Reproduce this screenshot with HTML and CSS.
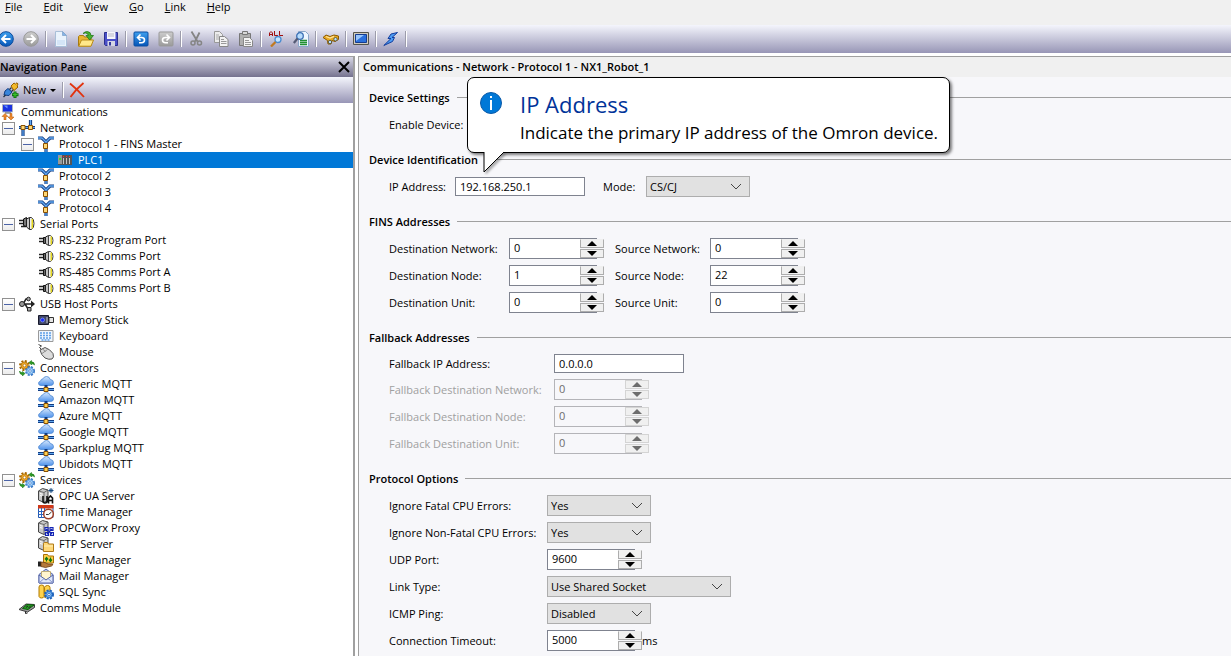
FILE: index.html
```html
<!DOCTYPE html>
<html lang="en">
<head>
    <meta charset="UTF-8">
    <meta name="viewport" content="width=device-width, initial-scale=1.0">
    <title>Communications</title>
    <link rel="stylesheet" href="styles.css">
</head>
<body>
    <!-- Icons used more than once -->
    <svg class="sprite" aria-hidden="true">
        <defs>
            <linearGradient id="cloudFill" x1="0" y1="0" x2="0" y2="1">
                <stop offset="0" stop-color="#d4e6fc"/>
                <stop offset="1" stop-color="#4f93ec"/>
            </linearGradient>
            <linearGradient id="blueBall" x1="0" y1="0" x2="0" y2="1">
                <stop offset="0" stop-color="#3fa0ee"/>
                <stop offset="1" stop-color="#0556b8"/>
            </linearGradient>
            <linearGradient id="greyBall" x1="0" y1="0" x2="0" y2="1">
                <stop offset="0" stop-color="#cdcdcd"/>
                <stop offset="1" stop-color="#9a9a9a"/>
            </linearGradient>
        </defs>
        <symbol id="protocol" viewBox="0 0 16 16">
            <path d="M0 2h4l4 4 4-4h4M8 6v10" fill="none" stroke="#123c82" stroke-width="3.200"/>
            <path d="M0 2h4l4 4 4-4h4M8 6v10" fill="none" stroke="#62a8f0" stroke-width="1.300"/>
            <path d="M5.500 7.500h4v5h-4z" fill="#ffd773" stroke="#8a5000"/>
        </symbol>
        <symbol id="serial" viewBox="0 0 16 16">
            <path d="M1 6.500h5M1 9.500h5" stroke="#222" stroke-width="1.700"/>
            <path d="M5.500 5.500h2v6h-2z" fill="#666" stroke="#111"/>
            <path d="M7.500 5l3-1.500v10l-3-2z" fill="#c4c4c4" stroke="#222"/>
            <path d="M10.500 3.500h2q2.500 1 2.500 5t-2.500 5h-2z" fill="#eee" stroke="#444"/>
            <path d="M12.500 4.500h1.500v8h-1.500z" fill="#e6d820"/>
        </symbol>
        <symbol id="cloud" viewBox="0 0 16 16">
            <path d="M3 9.500Q.5 9.500.5 7.300.5 5.500 2.500 5.200 2.800 3 5 2.800 6 .5 8.500.5q3 0 3.800 3 3.200.3 3.200 3.300 0 2.700-3 2.700z" fill="url(#cloudFill)" stroke="#4b86d2" stroke-width=".8"/>
            <path d="M8 9v3M0 13.500h16" stroke="#123c82" stroke-width="3"/>
            <path d="M0 13.500h16" stroke="#62a8f0"/>
            <path d="M6 11.500h4v4H6z" fill="#ffd050" stroke="#8a5000"/>
        </symbol>
        <symbol id="gears" viewBox="0 0 16 16">
            <circle cx="5.500" cy="5.500" r="4.500" fill="none" stroke="#a86800" stroke-width="2" stroke-dasharray="2 1.500"/>
            <circle cx="5.500" cy="5.500" r="3.500" fill="#efa92c" stroke="#b87a10"/>
            <circle cx="5.500" cy="5.500" r="1.400" fill="#fff" stroke="#a86800" stroke-width=".7"/>
            <circle cx="11" cy="11" r="4" fill="none" stroke="#3676c4" stroke-width="2" stroke-dasharray="2 1.200"/>
            <circle cx="11" cy="11" r="3.300" fill="#a5d2fa" stroke="#5b9ae0"/>
            <circle cx="11" cy="11" r="1.300" fill="#fff" stroke="#3676c4" stroke-width=".7"/>
            <path d="M10 2.500l2.500-2v1.300q3 0 3 3.200-1.200-1.300-3-1.200V5zM6 13.500l-2.500-2v1.200q-2 0-3-1.700 0 3.500 3 3.800V16z" fill="#2a9a22" stroke="#0e6a0c" stroke-width=".5"/>
        </symbol>
        <symbol id="server" viewBox="0 0 16 16">
            <path d="M.5 3l4-2.500L10 2v9.500L6 14.500.5 12z" fill="#c9c9c9" stroke="#444"/>
            <path d="M.5 3L6 4.500 10 2M6 4.500v10" fill="none" stroke="#555" stroke-width=".8"/>
            <path d="M2 5.500l2.500.7M2 7.500l2.500.7" stroke="#fff"/>
        </symbol>
    </svg>

    <nav class="menu-bar">
        <button type="button"><u>F</u>ile</button>
        <button type="button"><u>E</u>dit</button>
        <button type="button"><u>V</u>iew</button>
        <button type="button"><u>G</u>o</button>
        <button type="button"><u>L</u>ink</button>
        <button type="button"><u>H</u>elp</button>
    </nav>

    <div class="toolbar">
        <button type="button" aria-label="Back">
            <svg viewBox="0 0 16 16"><circle cx="8" cy="8" r="7.300" fill="url(#blueBall)" stroke="#0a4a9c"/><path d="M12.500 8H4.500M8 4L4 8l4 4" fill="none" stroke="#fff" stroke-width="2"/></svg>
        </button>
        <button type="button" aria-label="Forward">
            <svg viewBox="0 0 16 16"><circle cx="8" cy="8" r="7.300" fill="url(#greyBall)" stroke="#999"/><path d="M3.500 8h8M8 4l4 4-4 4" fill="none" stroke="#fff" stroke-width="2"/></svg>
        </button>
        <span class="separator"></span>
        <button type="button" aria-label="New">
            <svg viewBox="0 0 16 16"><path d="M2.500.5h7l4 4v11h-11z" fill="#eaf3fc" stroke="#a9bfd8"/><path d="M4 9h8v5H4z" fill="#d4e5f7"/><path d="M9.500.5v4h4z" fill="#86b4e6" stroke="#7a9fc8" stroke-width=".7"/></svg>
        </button>
        <button type="button" aria-label="Open">
            <svg viewBox="0 0 16 16"><path d="M.5 15V5.500l1-1h4l1 1.500h6.500V15z" fill="#e8b431" stroke="#a87a10"/><path d="M.7 15.200L3.500 9h12L13 15.200z" fill="#ffe88a" stroke="#b88a18"/><path d="M5 2.500Q7 .3 9.500.5q3.500.5 3.500 4h2.500L11.700 9 8 4.500h2.300Q10 2 7.500 2z" fill="#48b030" stroke="#187010" stroke-width=".7"/></svg>
        </button>
        <button type="button" aria-label="Save">
            <svg viewBox="0 0 16 16"><path d="M1.500 1.500h13v13h-12l-1-1z" fill="#4a50c8" stroke="#2c2f8c"/><path d="M4 1h8.500v7H4z" fill="#f5f5fb"/><path d="M5 3h6M5 5h6" stroke="#b5b5c6"/><path d="M4.500 10h7.500v5H4.500z" fill="#d4d6e4"/><path d="M6 11h2v3.500H6z" fill="#34389c"/></svg>
        </button>
        <span class="separator"></span>
        <button type="button" aria-label="Undo">
            <svg viewBox="0 0 16 16"><rect x="1" y="1" width="14" height="14" rx="1" fill="url(#blueBall)" stroke="#0a4fa4"/><path d="M5 6.500h3.500q3 0 3 2.500t-3 2.800H6M7.500 3.500l-3 3 3 3" fill="none" stroke="#fff" stroke-width="1.600"/></svg>
        </button>
        <button type="button" aria-label="Redo">
            <svg viewBox="0 0 16 16"><rect x="1" y="1" width="14" height="14" rx="1" fill="url(#greyBall)" stroke="#999"/><path d="M11 6.500H7.500q-3 0-3 2.500t3 2.800H10M8.500 3.500l3 3-3 3" fill="none" stroke="#fff" stroke-width="1.600"/></svg>
        </button>
        <span class="separator"></span>
        <button type="button" aria-label="Cut">
            <svg viewBox="0 0 16 16"><path d="M3.500.5l6 10M11.500 1.500l-4.500 9" stroke="#858585" stroke-width="1.800"/><circle cx="5" cy="12" r="2" fill="none" stroke="#858585" stroke-width="1.500"/><circle cx="11.500" cy="12" r="2" fill="none" stroke="#858585" stroke-width="1.500"/></svg>
        </button>
        <button type="button" aria-label="Copy">
            <svg viewBox="0 0 16 16"><path d="M1.500.5h5l3 3v8h-8z" fill="#ececec" stroke="#999"/><path d="M3 4h3M3 6h4M3 8h4" stroke="#aaa"/><path d="M6.500 5.500h5l3.500 3v7H6.500z" fill="#f2f2f2" stroke="#888"/><path d="M8 8.500h3M8 10.500h5.500M8 12.500h5.500" stroke="#999"/></svg>
        </button>
        <button type="button" aria-label="Paste">
            <svg viewBox="0 0 16 16"><path d="M1.500 2.500h11v12h-11z" fill="#b0b0b0" stroke="#777"/><path d="M4.500.5h5v3h-5z" fill="#d8d8d8" stroke="#777"/><path d="M5.500 6.500h6l3 3v6h-9z" fill="#f4f4f4" stroke="#888"/><path d="M7 9.500h4M7 11.500h6M7 13.500h6" stroke="#999"/></svg>
        </button>
        <span class="separator"></span>
        <button type="button" aria-label="Find all">
            <svg viewBox="0 0 16 16"><path d="M1.500 5V2l1.500-1.500L4.500 2v3M1.500 3.500h3M6.500 0v4.500H10M11.500 0v4.500H15" fill="none" stroke="#a01010"/><circle cx="10" cy="8.500" r="3" fill="#c8e6ff" stroke="#4a8cd0" stroke-width="1.300"/><path d="M7.500 11L3 15.500" stroke="#c07a20" stroke-width="2.300"/></svg>
        </button>
        <button type="button" aria-label="Find in page">
            <svg viewBox="0 0 16 16"><path d="M5.500.5h7l3 3v12h-10z" fill="#eef6ff" stroke="#8aa6c8"/><path d="M7 9.500h7M7 11.500h7M7 13.500h7" stroke="#209030" stroke-width="1.300"/><circle cx="7" cy="5" r="3.300" fill="#b8dcfc" stroke="#3c70b4" stroke-width="1.300"/><path d="M4.500 7.500L.8 12" stroke="#555a74" stroke-width="2.300"/></svg>
        </button>
        <span class="separator"></span>
        <button type="button" aria-label="Search">
            <svg viewBox="0 0 16 16"><path d="M0 6.500l3-2.500 4 1.500 4-1.500 4.500 1v3.500L12 10.500l-3-1-1 3.500H5l-.5-3.500z" fill="#e8a820" stroke="#8c5a00"/><path d="M3 5.500l4 1.500 4-1.700" fill="none" stroke="#ffe39a" stroke-width="1.300"/><circle cx="7" cy="11" r="1.700" fill="#b8e0ff" stroke="#4b4b30" stroke-width=".8"/><circle cx="12.500" cy="8.200" r="1.700" fill="#b8e0ff" stroke="#4b4b30" stroke-width=".8"/></svg>
        </button>
        <span class="separator"></span>
        <button type="button" aria-label="Display">
            <svg viewBox="0 0 16 16"><path d="M.5 1.500h15v12H.5z" fill="#d0ccc0" stroke="#55544c"/><path d="M2.500 3.500h11v8h-11z" fill="#2b70dc" stroke="#163c8e"/><path d="M3 4h8L3 10z" fill="#9ac6fb"/></svg>
        </button>
        <span class="separator"></span>
        <button type="button" aria-label="Update">
            <svg viewBox="0 0 16 16"><path d="M14.500 1.500L8 3 5 7.500h3L.8 14.500 9.500 10.500l2-4H9z" fill="#4c9cf4" stroke="#123c9c"/></svg>
        </button>
        <span class="separator"></span>
    </div>

    <div class="workspace">
        <aside class="navigation">
            <header class="navigation-header">
                <h2>Navigation Pane</h2>
                <button type="button" aria-label="Close"><svg viewBox="0 0 12 12"><path d="M1 1l10 10M11 1L1 11" stroke="#000" stroke-width="2"/></svg></button>
            </header>
            <div class="navigation-tools">
                <button type="button">
                    <svg viewBox="0 0 16 16"><path d="M1 13l1-4 3-2.500L9 10l-3 3.500z" fill="#3a86dc" stroke="#123c82"/><path d="M.5 15l2-2M6.500 7.500l2-2M8.500 9.500l2-2" stroke="#234" stroke-width="1.300"/><path d="M8 4l3-3 1.500 1L14 .8 15 2l-1 2 1 1-4 3.500z" fill="#f4bb2c" stroke="#966000"/><path d="M12 9.500V16M9 12.700h6.500" stroke="#0b6b0b" stroke-width="3"/><path d="M12 10.300v5M9.700 12.700h5" stroke="#3ac02c" stroke-width="1.300"/></svg>
                    New
                    <span class="arrow-down"></span>
                </button>
                <span class="separator"></span>
                <button type="button" aria-label="Delete">
                    <svg viewBox="0 0 16 16"><path d="M1 1.500Q8 7 15 15M14.500 1Q7 7 1.500 15" fill="none" stroke="#e2330e" stroke-width="1.800"/></svg>
                </button>
            </div>

            <ul class="tree">
                <li>
                    <div class="tree-row root">
                        <svg viewBox="0 0 16 16"><path d="M2.500.5h10v7.500h-10z" fill="#1b32e0" stroke="#b0b4c0"/><path d="M3.500 1.500h4v3z" fill="#6c90ff"/><path d="M5 9h6" stroke="#555"/><path d="M5 9.500l-3 3h2V16h2v-3.500h2zM11 16l-3-3h2V9.500h2V13h2z" fill="#f08a2c" stroke="#b05408" stroke-width=".5"/></svg>
                        <span>Communications</span>
                    </div>
                    <ul>
                        <li>
                            <div class="tree-row">
                                <button type="button" class="expander" aria-label="Collapse"></button>
                                <svg viewBox="0 0 16 16"><path d="M0 7.500h16M4 7v9M11.500 0v8" stroke="#123c82" stroke-width="3.200"/><path d="M0 7.500h16M4 7v9M11.500 0v8" stroke="#62a8f0" stroke-width="1.200"/><path d="M2 5.500h4v4H2zM9.500 5.500h4v4h-4z" fill="#ffd773" stroke="#8a5000"/></svg>
                                <span>Network</span>
                            </div>
                            <ul>
                                <li>
                                    <div class="tree-row">
                                        <button type="button" class="expander" aria-label="Collapse"></button>
                                        <svg><use href="#protocol"/></svg>
                                        <span>Protocol 1 - FINS Master</span>
                                    </div>
                                    <ul>
                                        <li>
                                            <div class="tree-row selected">
                                                <svg viewBox="0 0 16 16"><path d="M1 3h14v10H1z" fill="#555"/><path d="M1 3h4v9H1z" fill="#999"/><path d="M6.500 6v6M9.500 6v6M12.500 6v6" stroke="#c4c4c4"/><path d="M6 4h1v1H6zM9 4h1v1H9zM12 4h1v1h-1z" fill="#ff2a2a"/><path d="M2 6h2v2H2z" fill="#30e030"/></svg>
                                                <span>PLC1</span>
                                            </div>
                                        </li>
                                    </ul>
                                </li>
                                <li><div class="tree-row"><svg><use href="#protocol"/></svg><span>Protocol 2</span></div></li>
                                <li><div class="tree-row"><svg><use href="#protocol"/></svg><span>Protocol 3</span></div></li>
                                <li><div class="tree-row"><svg><use href="#protocol"/></svg><span>Protocol 4</span></div></li>
                            </ul>
                        </li>
                        <li>
                            <div class="tree-row">
                                <button type="button" class="expander" aria-label="Collapse"></button>
                                <svg viewBox="0 0 16 16"><path d="M0 4.500h5M0 7.500h5M2 10.500h5" stroke="#222" stroke-width="1.700"/><path d="M4.500 3l3-1.500v9l-3-1z" fill="#777" stroke="#111"/><path d="M7.500 3l3-1.500v12l-3-2.500z" fill="#c4c4c4" stroke="#222"/><path d="M10.500 1.500h2q2.500 1.500 2.500 6t-2.500 6h-2z" fill="#eee" stroke="#333"/><path d="M12.500 3h1.500v9.500h-1.500z" fill="#e6d820"/></svg>
                                <span>Serial Ports</span>
                            </div>
                            <ul>
                                <li><div class="tree-row"><svg><use href="#serial"/></svg><span>RS-232 Program Port</span></div></li>
                                <li><div class="tree-row"><svg><use href="#serial"/></svg><span>RS-232 Comms Port</span></div></li>
                                <li><div class="tree-row"><svg><use href="#serial"/></svg><span>RS-485 Comms Port A</span></div></li>
                                <li><div class="tree-row"><svg><use href="#serial"/></svg><span>RS-485 Comms Port B</span></div></li>
                            </ul>
                        </li>
                        <li>
                            <div class="tree-row">
                                <button type="button" class="expander" aria-label="Collapse"></button>
                                <svg viewBox="0 0 16 16"><path d="M2 8h12M4 8l3-5h2M6 8l3 5h2" fill="none" stroke="#222" stroke-width="1.500"/><circle cx="3" cy="8" r="2.500" fill="#999" stroke="#222"/><circle cx="9.500" cy="3" r="1.800" fill="#aaa" stroke="#222"/><path d="M8.500 11.500h3.500v3.500H8.500z" fill="#aaa" stroke="#222"/><path d="M12 4.500L16 8l-4 3.500z" fill="#222"/></svg>
                                <span>USB Host Ports</span>
                            </div>
                            <ul>
                                <li><div class="tree-row"><svg viewBox="0 0 16 16"><path d="M.5 3.500h10v9H.5z" fill="#424866" stroke="#16182a"/><circle cx="4.500" cy="8" r="2" fill="#1a2cff" stroke="#8ca4ff" stroke-width=".7"/><path d="M11 5.500h4.500v5H11z" fill="#e5e5e5" stroke="#333"/><path d="M9 5v6" stroke="#ccc"/></svg><span>Memory Stick</span></div></li>
                                <li><div class="tree-row"><svg viewBox="0 0 16 16"><path d="M.5 2.500h14.500v11H.5z" fill="#eef5fd" stroke="#9a9a9a"/><path d="M2 5h12M2 7.500h12M2 10h12M3.500 12h9" stroke="#5e9ee6" stroke-width="1.500" stroke-dasharray="2 1"/></svg><span>Keyboard</span></div></li>
                                <li><div class="tree-row"><svg viewBox="0 0 16 16"><path d="M.5.5l3 1.500-2 1.500L4 6" fill="none" stroke="#444"/><path d="M2 6l5-2.500q5 1.500 8 6 1.500 4-1 5.500-3 1-7-1Q3 11 2 6z" fill="#dcdcdc" stroke="#555"/><path d="M4 9.500l5.500-4M4.500 5l3 2.500" fill="none" stroke="#777" stroke-width=".8"/></svg><span>Mouse</span></div></li>
                            </ul>
                        </li>
                        <li>
                            <div class="tree-row">
                                <button type="button" class="expander" aria-label="Collapse"></button>
                                <svg><use href="#gears"/></svg>
                                <span>Connectors</span>
                            </div>
                            <ul>
                                <li><div class="tree-row"><svg><use href="#cloud"/></svg><span>Generic MQTT</span></div></li>
                                <li><div class="tree-row"><svg><use href="#cloud"/></svg><span>Amazon MQTT</span></div></li>
                                <li><div class="tree-row"><svg><use href="#cloud"/></svg><span>Azure MQTT</span></div></li>
                                <li><div class="tree-row"><svg><use href="#cloud"/></svg><span>Google MQTT</span></div></li>
                                <li><div class="tree-row"><svg><use href="#cloud"/></svg><span>Sparkplug MQTT</span></div></li>
                                <li><div class="tree-row"><svg><use href="#cloud"/></svg><span>Ubidots MQTT</span></div></li>
                            </ul>
                        </li>
                        <li>
                            <div class="tree-row">
                                <button type="button" class="expander" aria-label="Collapse"></button>
                                <svg><use href="#gears"/></svg>
                                <span>Services</span>
                            </div>
                            <ul>
                                <li><div class="tree-row"><svg viewBox="0 0 16 16"><use href="#server"/><path d="M5 8v5q0 2 2 2t2-2V8M10.500 15.500V10l2-2 2 2v5.500M10.500 12.500h4" fill="none" stroke="#111" stroke-width="1.600"/><path d="M13 0v5M10.500 2.500h5M11.300.8l3.400 3.400M14.700.8l-3.400 3.400" stroke="#174a80"/></svg><span>OPC UA Server</span></div></li>
                                <li><div class="tree-row"><svg viewBox="0 0 16 16"><path d="M.5 1.500h14.500v12H.5z" fill="#fff" stroke="#2458b0"/><path d="M0 1h15.500v3.500H0z" fill="#d03818"/><path d="M0 7.500h8M0 10.500h8M3.500 4v10M6.500 4v10" stroke="#2a66c4"/><circle cx="10.500" cy="10" r="4.800" fill="#fff" stroke="#a04028" stroke-width="1.500"/><path d="M10.500 10.500l3-2.500M10.500 10.500H8" stroke="#333"/></svg><span>Time Manager</span></div></li>
                                <li><div class="tree-row"><svg viewBox="0 0 16 16"><use href="#server"/><path d="M7 7.500h3v3H7zM12 7.500h3v3h-3zM7.500 12.500h3v3h-3zM12.500 12.500h3v3h-3zM8 9l6 5M14 9l-5 5" fill="#dfe7ff" stroke="#1424b4" stroke-width="1.200"/></svg><span>OPCWorx Proxy</span></div></li>
                                <li><div class="tree-row"><svg viewBox="0 0 16 16"><use href="#server"/><path d="M5.500 15.500v-8l1-1h3l1 1.500h5v7.500z" fill="#ffd878" stroke="#b07a18"/><path d="M6 10h9" stroke="#fff0b8"/></svg><span>FTP Server</span></div></li>
                                <li><div class="tree-row"><svg viewBox="0 0 16 16"><path d="M5.500 11V2.500h4l1 1.500h5v7z" fill="#ffd046" stroke="#a87008"/><path d="M8.500 9.500V6M7 7.500L8.500 5.500 10 7.500M12.500 5.500V9M11 7.500l1.500 2 1.500-2" fill="none" stroke="#147810" stroke-width="1.300"/><path d="M0 9.500h3v5H0z" fill="#222"/><path d="M3 10l4 .5 3 1.500h4.500q1 1-1 2l-6 1.500-4.500-1z" fill="#b5793c" stroke="#6b3c10" stroke-width=".8"/></svg><span>Sync Manager</span></div></li>
                                <li><div class="tree-row"><svg viewBox="0 0 16 16"><path d="M1 6.500L8 1l7 5.500v8.500H1z" fill="#b8c8f0" stroke="#5666a8"/><path d="M3.500 3.500h9V9L8 12 3.500 9z" fill="#fff5cf" stroke="#b59b50" stroke-width=".7"/><path d="M1 7l7 5 7-5v8H1z" fill="#dfe8fc" stroke="#5666a8"/><path d="M1 15l5-4.500M15 15l-5-4.500" stroke="#8796cc"/></svg><span>Mail Manager</span></div></li>
                                <li><div class="tree-row"><svg viewBox="0 0 16 16"><path d="M1 3q0-2 2.500-2T6 3v9.500q-.5 1.500-2.500 1.500T1 12.500zM6.500 3.500q.5-2 3-2t2.500 2V10l-5 4z" fill="#ffd34c" stroke="#b07a00"/><circle cx="11" cy="10.500" r="4" fill="#74b4f4" stroke="#1c60b8" stroke-width="2" stroke-dasharray="2 1.200"/><circle cx="11" cy="10.500" r="3" fill="#8ec6fa" stroke="#2a70c8"/><circle cx="11" cy="10.500" r="1.300" fill="#fff" stroke="#1c60b8" stroke-width=".8"/></svg><span>SQL Sync</span></div></li>
                            </ul>
                        </li>
                        <li>
                            <div class="tree-row">
                                <svg viewBox="0 0 16 16"><path d="M0 9.500L7 4l8.500.5v3L8.500 12z" fill="#9a9a9a" stroke="#3c3c3c"/><path d="M3.500 8.500L8 4.500l7 .5-6 4.500z" fill="#25a022" stroke="#0c5a0c"/><path d="M7 7.500l2-1.500M9.500 8l2-2M6.500 11.500v2l2-.5" fill="none" stroke="#222"/></svg>
                                <span>Comms Module</span>
                            </div>
                        </li>
                    </ul>
                </li>
            </ul>
        </aside>

        <main class="editor">
            <h1>Communications - Network - Protocol 1 - NX1_Robot_1</h1>
            <form class="settings">
                <section>
                    <h3>Device Settings</h3>
                    <div class="field">
                        <label for="enableDevice">Enable Device:</label>
                        <select id="enableDevice"><option>Yes</option></select>
                    </div>
                </section>

                <section class="identification">
                    <h3>Device Identification</h3>
                    <div class="field">
                        <label for="ipAddress">IP Address:</label>
                        <input type="text" id="ipAddress" value="192.168.250.1">
                        <label for="mode" class="mode-label">Mode:</label>
                        <select id="mode"><option>CS/CJ</option></select>
                    </div>
                    <div class="callout" role="tooltip">
                        <svg class="callout-icon" viewBox="0 0 22 22"><circle cx="11" cy="11" r="10.500" fill="#0078d7" stroke="#0b5aa8"/><path d="M10 4h2v2h-2zM10 8h2v10h-2z" fill="#fff"/></svg>
                        <div>
                            <h4>IP Address</h4>
                            <p>Indicate the primary IP address of the Omron device.</p>
                        </div>
                        <svg class="callout-tail" viewBox="0 0 24 24"><path d="M2 0v20L22 0" fill="#fff" stroke="#000"/></svg>
                    </div>
                </section>

                <section class="fins">
                    <h3>FINS Addresses</h3>
                    <div class="field">
                        <label for="destNetwork">Destination Network:</label>
                        <span class="spinner"><input type="text" id="destNetwork" value="0"><span class="steps"><button type="button" aria-label="Up"></button><button type="button" aria-label="Down"></button></span></span>
                        <label for="sourceNetwork" class="source-label">Source Network:</label>
                        <span class="spinner"><input type="text" id="sourceNetwork" value="0"><span class="steps"><button type="button" aria-label="Up"></button><button type="button" aria-label="Down"></button></span></span>
                    </div>
                    <div class="field">
                        <label for="destNode">Destination Node:</label>
                        <span class="spinner"><input type="text" id="destNode" value="1"><span class="steps"><button type="button" aria-label="Up"></button><button type="button" aria-label="Down"></button></span></span>
                        <label for="sourceNode" class="source-label">Source Node:</label>
                        <span class="spinner"><input type="text" id="sourceNode" value="22"><span class="steps"><button type="button" aria-label="Up"></button><button type="button" aria-label="Down"></button></span></span>
                    </div>
                    <div class="field">
                        <label for="destUnit">Destination Unit:</label>
                        <span class="spinner"><input type="text" id="destUnit" value="0"><span class="steps"><button type="button" aria-label="Up"></button><button type="button" aria-label="Down"></button></span></span>
                        <label for="sourceUnit" class="source-label">Source Unit:</label>
                        <span class="spinner"><input type="text" id="sourceUnit" value="0"><span class="steps"><button type="button" aria-label="Up"></button><button type="button" aria-label="Down"></button></span></span>
                    </div>
                </section>

                <section class="fallback">
                    <h3>Fallback Addresses</h3>
                    <div class="field short">
                        <label for="fallbackIp">Fallback IP Address:</label>
                        <input type="text" id="fallbackIp" value="0.0.0.0">
                    </div>
                    <div class="field disabled">
                        <label for="fallbackNetwork">Fallback Destination Network:</label>
                        <span class="spinner"><input type="text" id="fallbackNetwork" value="0" disabled><span class="steps"><button type="button" aria-label="Up" disabled></button><button type="button" aria-label="Down" disabled></button></span></span>
                    </div>
                    <div class="field disabled">
                        <label for="fallbackNode">Fallback Destination Node:</label>
                        <span class="spinner"><input type="text" id="fallbackNode" value="0" disabled><span class="steps"><button type="button" aria-label="Up" disabled></button><button type="button" aria-label="Down" disabled></button></span></span>
                    </div>
                    <div class="field disabled">
                        <label for="fallbackUnit">Fallback Destination Unit:</label>
                        <span class="spinner"><input type="text" id="fallbackUnit" value="0" disabled><span class="steps"><button type="button" aria-label="Up" disabled></button><button type="button" aria-label="Down" disabled></button></span></span>
                    </div>
                </section>

                <section class="options">
                    <h3>Protocol Options</h3>
                    <div class="field">
                        <label for="ignoreFatal">Ignore Fatal CPU Errors:</label>
                        <select id="ignoreFatal"><option>Yes</option><option>No</option></select>
                    </div>
                    <div class="field">
                        <label for="ignoreNonFatal">Ignore Non-Fatal CPU Errors:</label>
                        <select id="ignoreNonFatal"><option>Yes</option><option>No</option></select>
                    </div>
                    <div class="field">
                        <label for="udpPort">UDP Port:</label>
                        <span class="spinner"><input type="text" id="udpPort" value="9600"><span class="steps"><button type="button" aria-label="Up"></button><button type="button" aria-label="Down"></button></span></span>
                    </div>
                    <div class="field">
                        <label for="linkType">Link Type:</label>
                        <select id="linkType" class="wide"><option>Use Shared Socket</option></select>
                    </div>
                    <div class="field">
                        <label for="icmpPing">ICMP Ping:</label>
                        <select id="icmpPing"><option>Disabled</option></select>
                    </div>
                    <div class="field">
                        <label for="timeout">Connection Timeout:</label>
                        <span class="spinner"><input type="text" id="timeout" value="5000"><span class="steps"><button type="button" aria-label="Up"></button><button type="button" aria-label="Down"></button></span></span>
                        <span>ms</span>
                    </div>
                </section>
            </form>
        </main>
    </div>
</body>
</html>
```
FILE: styles.css
```css
* {
    box-sizing: border-box;
}
body {
    margin: 0;
    height: 100vh;
    display: flex;
    flex-direction: column;
    overflow: hidden;
    background-color: #fff;
    color: #000;
    font-family: "Open Sans", "Noto Sans", sans-serif;
    font-size: 11px;
    line-height: 16px;
}
h1, h2, h3, h4, p, ul {
    margin: 0;
    padding: 0;
}
h1, h2, h3 {
    font-size: 11px;
    font-weight: 600;
}
button, input, select {
    font: inherit;
    color: inherit;
}
button {
    padding: 0;
    border: none;
    background: none;
}
svg {
    flex: none;
    width: 16px;
    height: 16px;
}
.sprite {
    position: absolute;
    width: 0;
    height: 0;
}

/* Menu and toolbar */
.menu-bar {
    flex: none;
    display: flex;
    align-items: flex-start;
    gap: 21px;
    height: 25px;
    padding-left: 5px;
    background-color: #f0f0f0;
    line-height: 14px;
}
.toolbar {
    flex: none;
    display: flex;
    align-items: center;
    height: 28px;
    margin-left: -7px;
    background: linear-gradient(#f4f5fc, #9896b6);
}
.toolbar button {
    display: flex;
    justify-content: center;
    width: 25px;
}
.separator {
    flex: none;
    width: 2px;
    height: 16px;
    background-color: #fff;
    border-left: 1px solid #9c9cab;
}
.toolbar .separator {
    margin: 0 1px 0 2px;
}

/* Panes */
.workspace {
    flex: 1;
    display: flex;
    gap: 3px;
    min-height: 0;
    padding-top: 3px;
}
.navigation {
    flex: none;
    width: 355px;
    border-top: 1px solid #a0a0a0;
    border-right: 2px solid #a0a0a0;
}
.navigation-header {
    display: flex;
    align-items: center;
    justify-content: space-between;
    height: 20px;
    padding: 0 3px 0 0;
    background: linear-gradient(#d6d6e4, #75728f);
}
.navigation-header button {
    display: flex;
}
.navigation-header svg {
    width: 12px;
    height: 12px;
}
.navigation-tools {
    display: flex;
    align-items: center;
    height: 26px;
    padding-left: 3px;
    background: linear-gradient(#f4f5fc, #9896b6);
}
.navigation-tools button {
    display: flex;
    align-items: center;
    gap: 4px;
}
.navigation-tools .separator {
    margin: 0 5px 0 6px;
}
.arrow-down {
    border: 3px solid transparent;
    border-top-color: #000;
    border-bottom: none;
}

/* Tree */
.tree {
    padding-top: 1px;
    list-style: none;
}
.tree ul {
    list-style: none;
}
.tree-row {
    display: flex;
    align-items: center;
    height: 16px;
    padding-left: 19px;
    white-space: nowrap;
}
.tree-row.root {
    padding-left: 0;
}
.tree ul ul .tree-row {
    padding-left: 38px;
}
.tree ul ul ul .tree-row {
    padding-left: 57px;
}
.tree-row svg {
    margin-right: 5px;
}
.tree-row.selected {
    background-color: #0078d7;
    color: #fff;
}
.expander {
    flex: none;
    width: 13px;
    height: 13px;
    margin: 0 4px 0 -17px;
    border: 1px solid #919191;
    background: linear-gradient(#4b63a7, #4b63a7) center / 9px 1px no-repeat, linear-gradient(#fff, #ececec);
}

/* Settings form */
.editor {
    flex: 1;
    min-width: 0;
    border-top: 1px solid #a0a0a0;
    border-left: 1px solid #a0a0a0;
    background-color: #f7f7fa;
}
.editor h1 {
    height: 20px;
    padding-left: 4px;
    background-color: #f0f0f0;
    line-height: 20px;
}
.settings {
    display: flex;
    flex-direction: column;
    gap: 8px;
    padding: 7px 0 0 10px;
}
.settings h3 {
    display: flex;
    align-items: center;
    gap: 7px;
    height: 27px;
}
.settings h3::after {
    content: "";
    flex: 1;
    height: 1px;
    background-color: #a0a0a0;
}
.field {
    display: flex;
    align-items: center;
    height: 27px;
    padding-left: 20px;
    white-space: nowrap;
}
.field.short {
    height: 25px;
}
.field label {
    flex: none;
    width: 85px;
}
.identification {
    position: relative;
}
.identification .field label {
    width: 66px;
}
.identification .field .mode-label {
    width: 43px;
    margin-left: 18px;
}
.fins .field label {
    width: 120px;
}
.fins .field .source-label {
    width: 95px;
    margin-left: 11px;
}
.fallback .field label {
    width: 165px;
}
.options .field label {
    width: 158px;
}
.field input {
    width: 130px;
    height: 19px;
    padding: 0 4px;
    border: 1px solid #7f838f;
    background-color: #fff;
}
.field select {
    appearance: none;
    width: 104px;
    height: 21px;
    padding: 0 3px;
    border: 1px solid #adadad;
    border-radius: 0;
    background: #e1e1e1 url("data:image/svg+xml,%3Csvg xmlns='http://www.w3.org/2000/svg' width='12' height='7'%3E%3Cpath d='M1 1l5 5 5-5' fill='none' stroke='%23444'/%3E%3C/svg%3E") right 7px center no-repeat;
}
.field select.wide {
    width: 184px;
}
.spinner {
    display: flex;
    align-items: center;
    width: 95px;
}
.spinner input {
    flex: none;
    width: 88px;
    height: 21px;
    padding-bottom: 2px;
    border-right: none;
}
.steps {
    flex: none;
    display: flex;
    flex-direction: column;
    gap: 1px;
    width: 24px;
    margin-left: -17px;
    background-color: #f7f7fa;
}
.steps button {
    display: flex;
    align-items: center;
    justify-content: center;
    height: 9px;
    border: 1px solid #adadad;
    background-color: #f0f0f0;
}
.steps button:first-child {
    border-top-color: #f0f0f0;
}
.steps button::before {
    content: "";
    border: 5px solid transparent;
    border-top: none;
    border-bottom-color: #000;
}
.steps button:last-child::before {
    border-top: 5px solid #000;
    border-bottom: none;
}
.disabled {
    color: #a0a0a0;
}
.disabled input {
    border-color: #b4b4b8;
    background-color: #f7f7fa;
    color: #6d6d6d;
}
.disabled .steps button {
    border-color: #d4d4d4;
}
.disabled .steps button::before {
    border-bottom-color: #6d6d6d;
}
.disabled .steps button:last-child::before {
    border-top-color: #6d6d6d;
}

/* Help balloon over the form */
.callout {
    position: absolute;
    left: 98px;
    bottom: 47px;
    display: flex;
    gap: 18px;
    padding: 12px 11px 4px 12px;
    border: 1px solid #000;
    border-radius: 7px;
    background-color: #fff;
    box-shadow: 2px 2px 3px rgba(0, 0, 0, 0.5);
    white-space: nowrap;
}
.callout h4 {
    color: #003399;
    font-size: 22px;
    font-weight: 400;
    line-height: 28px;
}
.callout p {
    font-size: 17px;
    line-height: 30px;
}
.callout-icon {
    width: 22px;
    height: 22px;
    margin-top: 2px;
}
.callout-tail {
    position: absolute;
    left: 14px;
    top: 100%;
    width: 24px;
    height: 24px;
    filter: drop-shadow(2px 2px 1px rgba(0, 0, 0, 0.3));
}
```
